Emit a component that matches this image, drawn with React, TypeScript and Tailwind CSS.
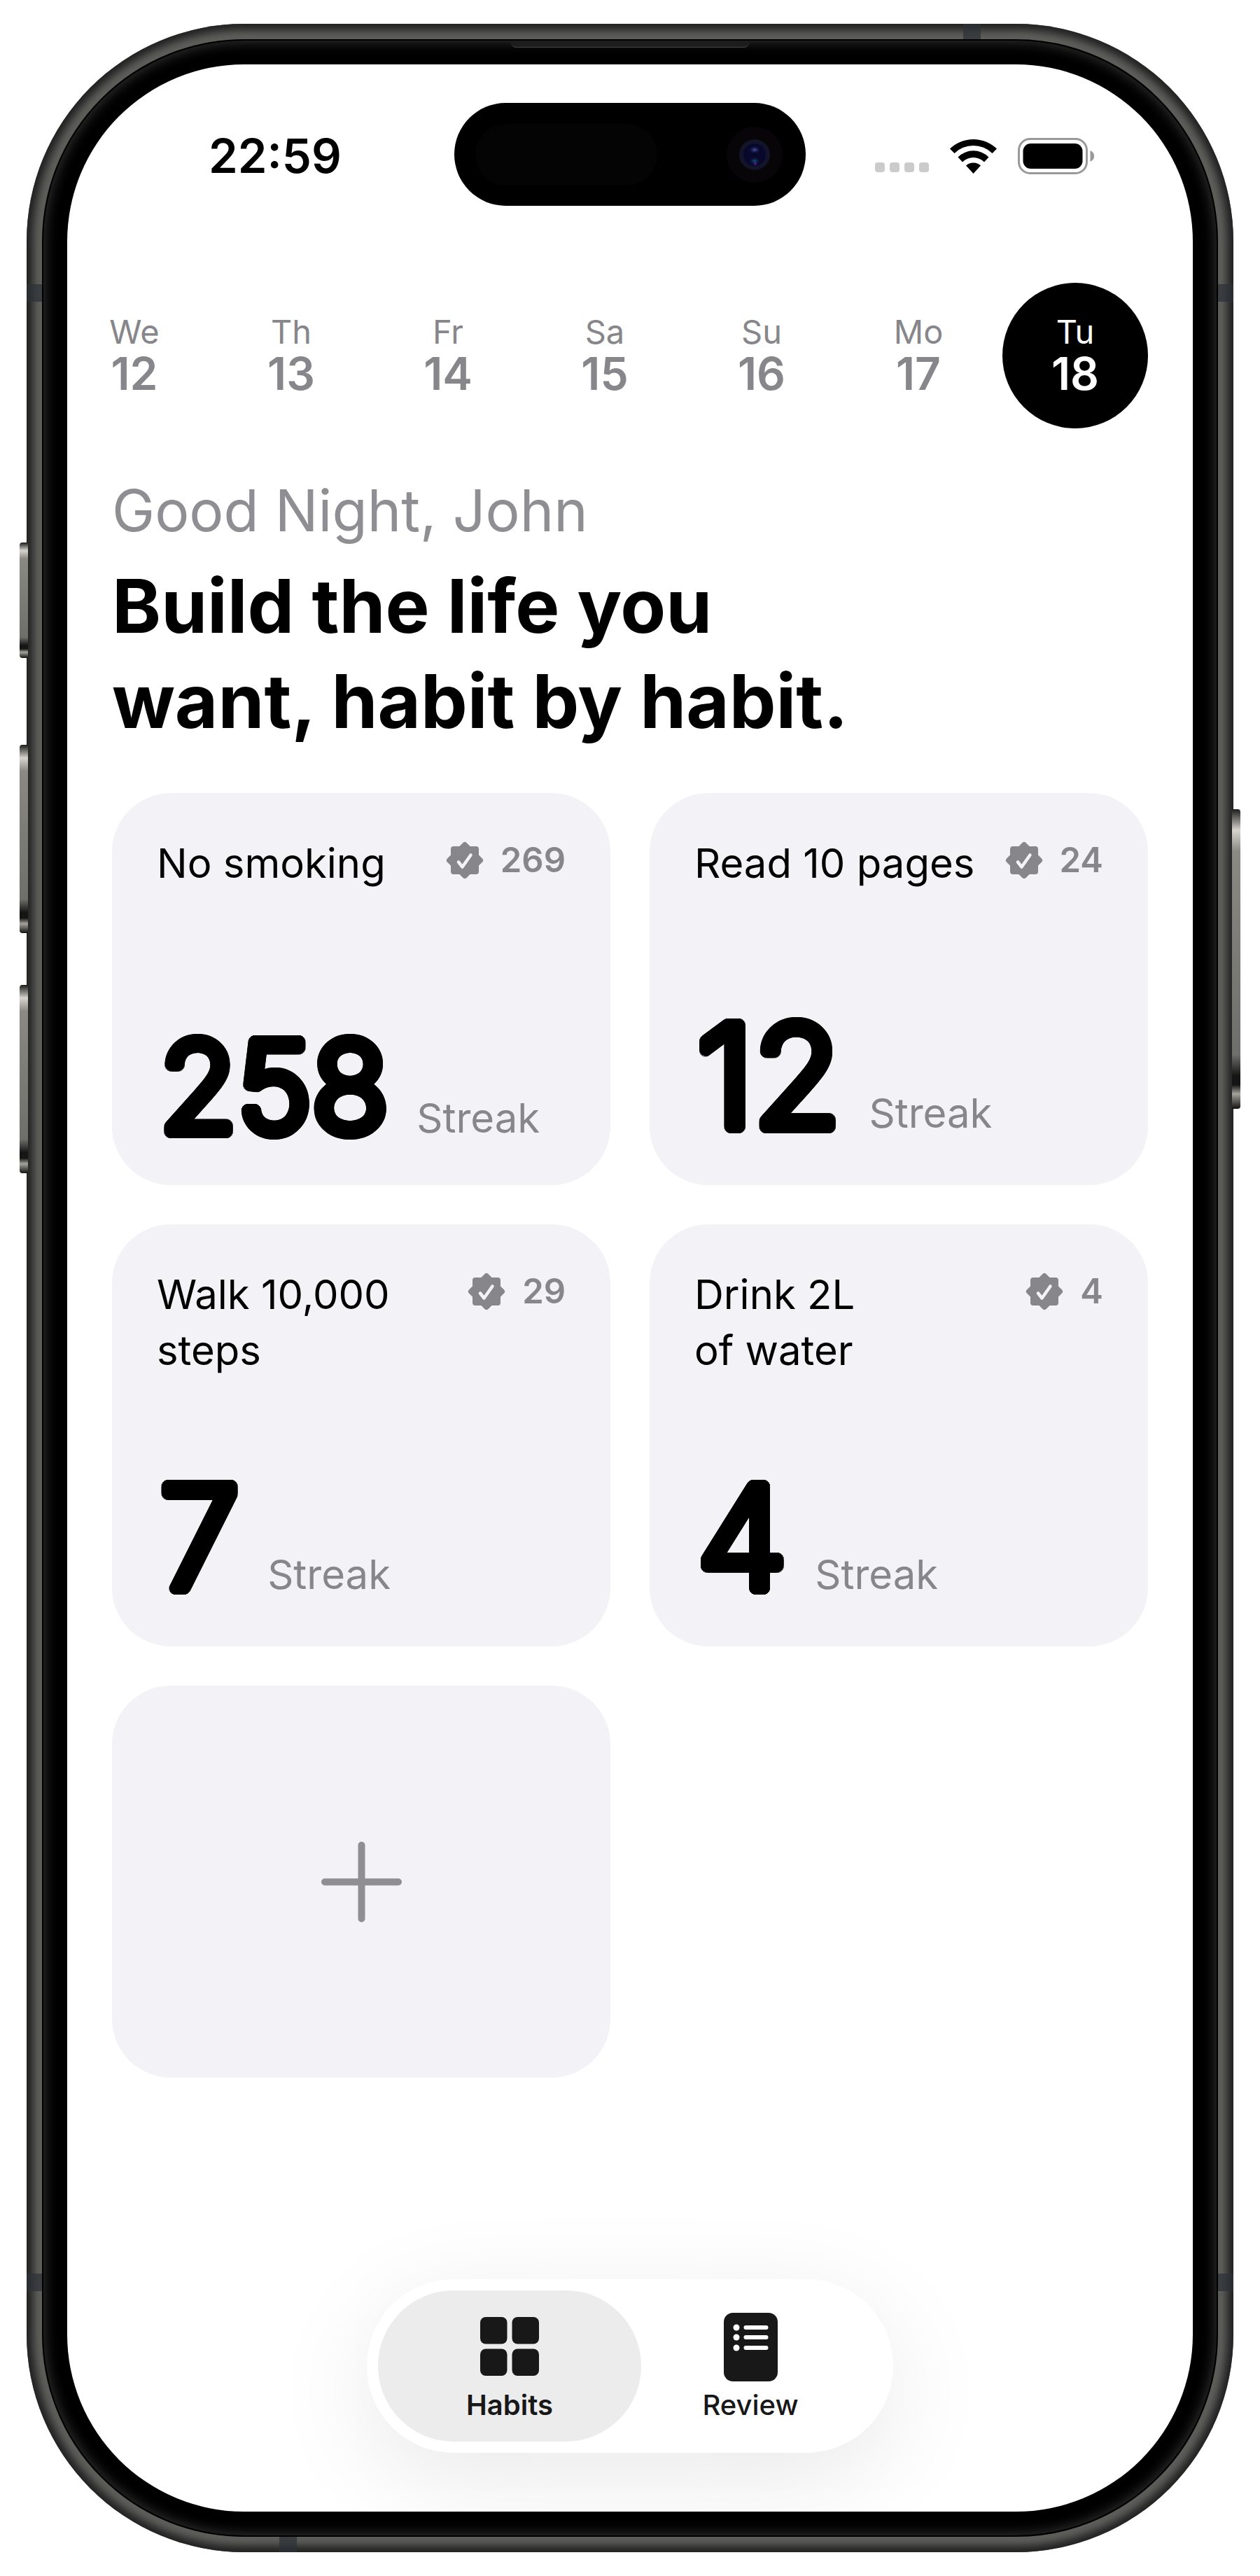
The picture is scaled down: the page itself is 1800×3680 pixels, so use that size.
import React from "react";

const days = [
  { name: "We", date: 12 },
  { name: "Th", date: 13 },
  { name: "Fr", date: 14 },
  { name: "Sa", date: 15 },
  { name: "Su", date: 16 },
  { name: "Mo", date: 17 },
  { name: "Tu", date: 18, active: true },
];

const habits = [
  { title: "No smoking", total: 269, streak: 258 },
  { title: "Read 10 pages", total: 24, streak: 12 },
  { title: "Walk 10,000\nsteps", total: 29, streak: 7 },
  { title: "Drink 2L\nof water", total: 4, streak: 4 },
];

// Ring of hard shadows, thickens the digits and rounds their ends
const roundDigits =
  "[text-shadow:8px_0_0_black,8px_2px_0_black,7px_4px_0_black,6px_5px_0_black,5px_6px_0_black,4px_7px_0_black,2px_8px_0_black,0_8px_0_black,-2px_8px_0_black,-4px_7px_0_black,-5px_6px_0_black,-6px_5px_0_black,-7px_4px_0_black,-8px_2px_0_black,-8px_0_0_black,-8px_-2px_0_black,-7px_-4px_0_black,-6px_-5px_0_black,-5px_-6px_0_black,-4px_-7px_0_black,-2px_-8px_0_black,0_-8px_0_black,2px_-8px_0_black,4px_-7px_0_black,5px_-6px_0_black,6px_-5px_0_black,7px_-4px_0_black,8px_-2px_0_black]";

function SealIcon() {
  return (
    <svg viewBox="0 0 54 54" className="size-[54px] shrink-0" aria-hidden="true">
      <g fill="#86868b" stroke="#86868b" strokeWidth="8" strokeLinejoin="round">
        <path d="M11 11H43V43H11Z" />
        <path d="M27 5L49 27L27 49L5 27Z" />
      </g>
      <path
        d="M18 29.500L23.500 36.500L35.500 19.500"
        fill="none"
        stroke="#f2f2f7"
        strokeWidth="4.500"
        strokeLinecap="round"
        strokeLinejoin="round"
      />
    </svg>
  );
}

function StatusBar() {
  return (
    <header className="flex h-[151px] items-center justify-between pr-[140px] pl-[202px]">
      <time className="text-[67px] leading-none font-semibold">22:59</time>
      <div className="flex items-center">
        <div className="flex gap-[7px] pt-8 pr-[30px]">
          <span className="size-[14px] rounded bg-[#cbcbcb]" />
          <span className="size-[14px] rounded bg-[#cbcbcb]" />
          <span className="size-[14px] rounded bg-[#cbcbcb]" />
          <span className="size-[14px] rounded bg-[#cbcbcb]" />
        </div>
        <svg viewBox="0 0 67 50" className="mr-[30px] h-[50px] w-[67px]" aria-hidden="true">
          <path d="M0 14.500A48 48 0 0 1 67 14.500L60.500 21A38.500 38.500 0 0 0 6.500 21Z" />
          <path d="M11.500 26.500A31 31 0 0 1 55.500 26.500L49 33.500A22 22 0 0 0 18 33.500Z" />
          <path d="M23 38.500A15.500 15.500 0 0 1 44 38.500L33.500 50Z" />
        </svg>
        <svg viewBox="0 0 110 52" className="h-[52px] w-[110px]" aria-hidden="true">
          <rect x="1.500" y="1.500" width="97" height="49" rx="16" fill="none" stroke="#999" strokeWidth="3" />
          <rect x="7.500" y="8" width="85" height="36" rx="11" />
          <path d="M103.500 18C111 21 111 31 103.500 34Z" fill="#999" />
        </svg>
      </div>
    </header>
  );
}

function DynamicIsland() {
  return (
    <div className="absolute top-[55px] left-1/2 flex h-[147px] w-[502px] -translate-x-1/2 items-center justify-between rounded-full bg-black pr-[33px] pl-[30px]">
      <div className="h-[88px] w-[260px] rounded-full bg-[#040404]" />
      <svg viewBox="0 0 80 80" className="size-[80px]" aria-hidden="true">
        <defs>
          <radialGradient id="glintTop">
            <stop offset="0" stopColor="#4a55a8" />
            <stop offset="1" stopColor="#0b0b2a" stopOpacity="0" />
          </radialGradient>
          <radialGradient id="glintBottom">
            <stop offset="0" stopColor="#0c5a6c" />
            <stop offset="1" stopColor="#1a0a4a" stopOpacity="0" />
          </radialGradient>
        </defs>
        <circle cx="40" cy="40" r="40" fill="#070508" />
        <circle cx="40" cy="40" r="22" fill="#13142a" />
        <circle cx="40" cy="40" r="16" fill="#08082c" />
        <ellipse cx="40" cy="33" rx="9" ry="6" fill="url(#glintTop)" />
        <ellipse cx="40" cy="49" rx="8" ry="6" fill="url(#glintBottom)" />
        <circle cx="41" cy="53" r="2" fill="#4a1a80" />
      </svg>
    </div>
  );
}

function HabitCard({ title, total, streak }: { title: string; total: number; streak: number }) {
  const size = streak > 99 ? "text-[180px] leading-[220px]" : "text-[204px] leading-[252px]";

  return (
    <article className="flex min-h-[560px] flex-col justify-between rounded-[84px] bg-[#f2f2f7] px-16 pt-[60px] pb-[30px]">
      <div className="flex items-start justify-between gap-10">
        <h2 className="text-[58px] leading-[80px] whitespace-pre-line">{title}</h2>
        <p className="flex h-[72px] items-center gap-6 text-[49px] font-semibold text-[#86868b]">
          <SealIcon />
          {total}
        </p>
      </div>
      <p className="flex items-baseline gap-10 pt-[101px] pl-1">
        <span className={`font-light ${size} ${roundDigits}`}>{streak}</span>
        <span className="text-[58px] leading-none text-[#86868b]">Streak</span>
      </p>
    </article>
  );
}

function TabBar() {
  return (
    <nav className="absolute bottom-[84px] left-1/2 flex -translate-x-1/2 rounded-full bg-white p-4 text-[40px] leading-[48px] text-[#181818] shadow-[0_36px_150px_rgba(0,0,0,0.09)]">
      <button className="-mr-8 flex h-[216px] w-[376px] flex-col items-center justify-end gap-[18px] rounded-full bg-[#ececec] pb-7 font-semibold">
        <svg viewBox="0 0 84 84" className="size-[84px]" fill="#181818" aria-hidden="true">
          <rect width="38.500" height="38.500" rx="8" />
          <rect x="45.500" width="38.500" height="38.500" rx="8" />
          <rect y="45.500" width="38.500" height="38.500" rx="8" />
          <rect x="45.500" y="45.500" width="38.500" height="38.500" rx="8" />
        </svg>
        Habits
      </button>
      <button className="flex h-[216px] w-[376px] flex-col items-center justify-end gap-[10px] rounded-full pb-7 font-medium">
        <svg viewBox="0 0 77 98" className="h-[98px] w-[77px]" aria-hidden="true">
          <rect width="77" height="98" rx="13" fill="#181818" />
          <g fill="#fff">
            <circle cx="18" cy="21" r="4.500" />
            <circle cx="18" cy="35" r="4.500" />
            <circle cx="18" cy="50" r="4.500" />
            <rect x="28.500" y="18" width="35" height="6" rx="3" />
            <rect x="28.500" y="32" width="35" height="6" rx="3" />
            <rect x="28.500" y="47" width="35" height="6" rx="3" />
          </g>
        </svg>
        Review
      </button>
    </nav>
  );
}

// Physical keys that stick out of the phone body
function SideKey({ className }: { className: string }) {
  return (
    <div
      className={
        "absolute w-[12px] bg-[linear-gradient(#1c1c1b,#d6d4cd_7%,#8a8984_14%,#6e6e6a_82%,#151515_89%,#151515_92%,#a5a39c_95%,#111)] " +
        className
      }
    />
  );
}

export default function App() {
  return (
    <div className="flex min-h-screen w-full bg-white px-[38px] py-[34px] font-['Inter',sans-serif] text-black">
      <div className="relative flex flex-1 rounded-[311px] bg-[#5e5e5b] p-[22px] shadow-[inset_0_0_12px_9px_#202121]">
        <SideKey className="top-[741px] -left-[10px] h-[165px] rounded-l" />
        <SideKey className="top-[1030px] -left-[10px] h-[269px] rounded-l" />
        <SideKey className="top-[1373px] -left-[10px] h-[269px] rounded-l" />
        <SideKey className="top-[1122px] -right-[10px] h-[428px] rounded-r" />
        <div className="absolute top-0 right-[361px] h-[22px] w-[25px] bg-[#2c3036]/70" />
        <div className="absolute bottom-0 left-[361px] h-[22px] w-[25px] bg-[#2c3036]/70" />
        <div className="absolute top-[372px] left-0 h-[25px] w-[22px] bg-[#2c3036]/70" />
        <div className="absolute top-[372px] right-0 h-[25px] w-[22px] bg-[#2c3036]/70" />
        <div className="absolute bottom-[373px] left-0 h-[25px] w-[22px] bg-[#2c3036]/70" />
        <div className="absolute right-0 bottom-[373px] h-[25px] w-[22px] bg-[#2c3036]/70" />

        <div className="relative flex flex-1 rounded-[289px] border-2 border-black bg-black p-[34px] shadow-[inset_0_0_18px_2px_#333]">
          <div className="absolute top-0 left-1/2 h-[10px] w-[341px] -translate-x-1/2 rounded-b-lg border-b border-[#444] bg-[#1d1d1d]" />

          <main className="relative flex-1 overflow-hidden rounded-[253px] bg-white pt-[55px]">
            <DynamicIsland />
            <StatusBar />

            <ol className="mt-[106px] flex h-[208px] justify-between pr-[136px] pl-16 text-[#86868b]">
              {days.map((day) => (
                <li
                  key={day.date}
                  className={
                    day.active
                      ? "-mx-[72px] flex w-[208px] flex-col items-center justify-center rounded-full bg-black pb-1 text-white"
                      : "flex w-16 flex-col items-center justify-center pb-1"
                  }
                >
                  <span className="text-[47px] leading-[56px]">{day.name}</span>
                  <span className="text-[64px] leading-[64px] font-semibold">{day.date}</span>
                </li>
              ))}
            </ol>

            <section className="px-16 pt-[66px]">
              <p className="text-[82px] leading-[104px] text-[#8e8e93]">Good Night, John</p>
              <h1 className="pt-4 text-[106px] leading-[136px] font-bold">
                Build the life you
                <br />
                want, habit by habit.
              </h1>
            </section>

            <section className="grid grid-cols-2 gap-14 px-16 pt-[63px]">
              {habits.map((habit) => (
                <HabitCard key={habit.title} {...habit} />
              ))}
              <button
                aria-label="Add habit"
                className="flex h-[560px] items-center justify-center rounded-[84px] bg-[#f2f2f7]"
              >
                <svg viewBox="0 0 115 115" className="size-[115px]" aria-hidden="true">
                  <path d="M57.500 5V110M5 57.500H110" stroke="#8e8e93" strokeWidth="10" strokeLinecap="round" />
                </svg>
              </button>
            </section>

            <TabBar />
          </main>
        </div>
      </div>
    </div>
  );
}
